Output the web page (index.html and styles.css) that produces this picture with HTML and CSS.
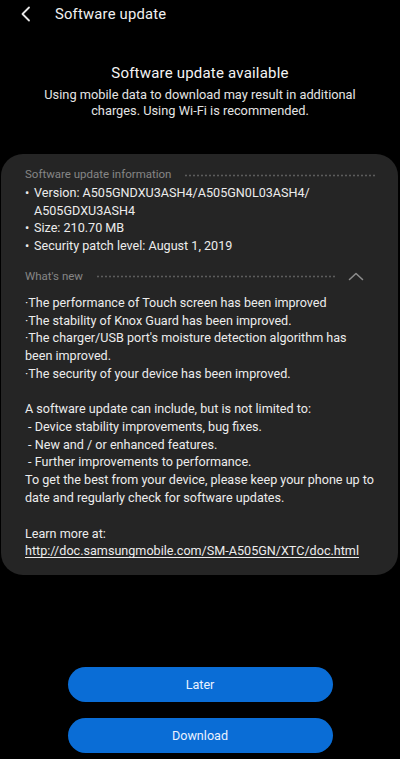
FILE: index.html
```html
<!DOCTYPE html>
<html>
<head>
<meta charset="utf-8">
<link rel="stylesheet" href="styles.css">
</head>
<body>
<div class="screen">
  <header class="topbar">
    <svg class="back" width="12" height="16" viewBox="0 0 12 16"><polyline points="9,1.5 2.5,8 9,14.5" fill="none" stroke="#e6e6e6" stroke-width="1.8" stroke-linecap="round" stroke-linejoin="round"/></svg>
    <span class="title">Software update</span>
  </header>

  <section class="intro">
    <div class="intro-title">Software update available</div>
    <div class="intro-text">Using mobile data to download may result in additional<br>charges. Using Wi-Fi is recommended.</div>
  </section>

  <section class="card">
    <div class="sec-head">
      <span class="sec-label">Software update information</span>
      <span class="dots"></span>
    </div>
    <ul class="info">
      <li><span class="bul">•</span><span>Version: A505GNDXU3ASH4/A505GN0L03ASH4/<br>A505GDXU3ASH4</span></li>
      <li><span class="bul">•</span><span>Size: 210.70 MB</span></li>
      <li><span class="bul">•</span><span>Security patch level: August 1, 2019</span></li>
    </ul>

    <div class="sec-head second">
      <span class="sec-label">What's new</span>
      <span class="dots"></span>
      <svg class="chev" width="16" height="9" viewBox="0 0 16 9"><polyline points="1.5,7.5 8,1.5 14.5,7.5" fill="none" stroke="#8c8c8c" stroke-width="1.6" stroke-linecap="round" stroke-linejoin="round"/></svg>
    </div>
    <div class="body">
      <p>·The performance of Touch screen has been improved<br>·The stability of Knox Guard has been improved.<br>·The charger/USB port's moisture detection algorithm has<br>been improved.<br>·The security of your device has been improved.</p>
      <p>A software update can include, but is not limited to:<br>&nbsp;- Device stability improvements, bug fixes.<br>&nbsp;- New and / or enhanced features.<br>&nbsp;- Further improvements to performance.<br>To get the best from your device, please keep your phone up to<br>date and regularly check for software updates.</p>
      <p>Learn more at:<br><span class="link">http://doc.samsungmobile.com/SM-A505GN/XTC/doc.html</span></p>
    </div>
  </section>

  <div class="actions">
    <button class="btn">Later</button>
    <button class="btn">Download</button>
  </div>
</div>
</body>
</html>
```

FILE: styles.css
```css
html, body {
  margin: 0;
  padding: 0;
  background: #000;
}
body {
  width: 400px;
  height: 759px;
  overflow: hidden;
  font-family: Roboto, "Liberation Sans", sans-serif;
  color: #ececec;
}
.screen {
  display: flex;
  flex-direction: column;
}
.topbar {
  height: 27px;
  display: flex;
  align-items: center;
  padding-left: 20px;
}
.back {
  display: block;
}
.title {
  margin-left: 23px;
  font-size: 14.8px;
  color: #f0f0f0;
  letter-spacing: 0.2px;
}
.intro {
  margin-top: 36px;
  text-align: center;
}
.intro-title {
  font-size: 15px;
  line-height: 20px;
  color: #f4f4f4;
  letter-spacing: 0.2px;
}
.intro-text {
  margin-top: 4px;
  font-size: 12.8px;
  line-height: 16px;
  color: #e4e4e4;
}
.card {
  margin: 35px 2px 0 1px;
  background: #252525;
  border-radius: 22px;
  padding: 12px 14px 15px 24px;
  font-size: 12.6px;
  line-height: 17.7px;
}
.sec-head {
  display: flex;
  align-items: center;
  height: 18px;
}
.sec-head.second {
  margin-top: 13px;
}
.sec-label {
  color: #858585;
  font-size: 11.5px;
}
.dots {
  flex: 1;
  height: 3px;
  margin-left: 13px;
  margin-right: 8px;
  background-image: radial-gradient(circle, #5c5c5c 0.9px, transparent 1.2px);
  background-size: 4px 3px;
  background-repeat: repeat-x;
}
.sec-head.second .dots {
  margin-right: 12px;
}
.chev {
  display: block;
  margin-right: 20px;
}
.info {
  list-style: none;
  margin: 0;
  padding: 0;
}
.info li {
  display: flex;
}
.bul {
  width: 9px;
  flex: none;
}
.body {
  margin-top: 8px;
}
.body p {
  margin: 0 0 18px 0;
}
.body p:last-child {
  margin-bottom: 0;
}
.link {
  text-decoration: underline;
  text-underline-offset: 2px;
}
.actions {
  margin-top: 92px;
  display: flex;
  flex-direction: column;
  align-items: center;
  gap: 16px;
}
.btn {
  width: 265px;
  height: 35px;
  border: none;
  border-radius: 18px;
  background: #0a6dd6;
  color: #eaf2ff;
  font-family: Roboto, "Liberation Sans", sans-serif;
  font-size: 12.6px;
  padding: 0;
}
```
